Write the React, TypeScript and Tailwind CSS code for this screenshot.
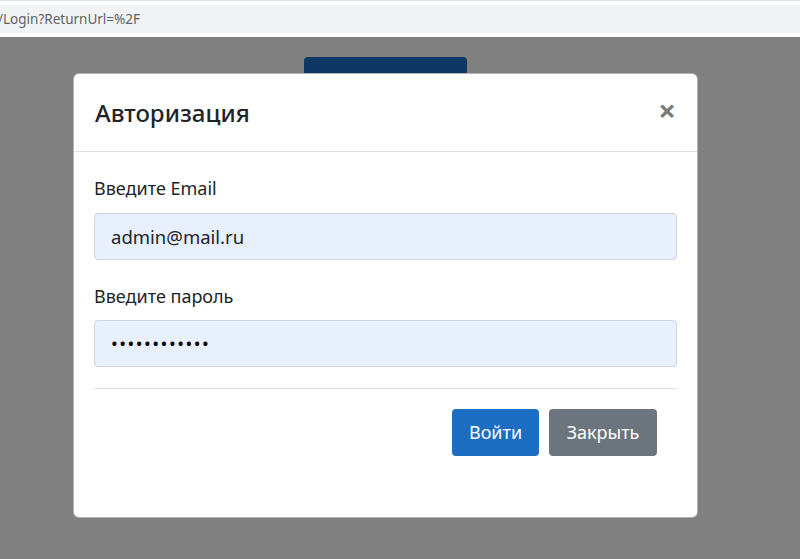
export default function App() {
  return (
    <div className="w-[800px] h-[559px] flex flex-col bg-white overflow-hidden font-['Noto_Sans',sans-serif]">
      {/* browser address bar */}
      <div className="h-px bg-[#dee1e6]" />
      <div className="pt-[4px] pb-[4px] bg-white">
        <div className="h-[28px] bg-[#f1f3f4] flex items-center -ml-[2px] text-[13.5px] text-[#5f6368]">
          /Login?ReturnUrl=%2F
        </div>
      </div>

      {/* page behind the backdrop */}
      <div className="relative flex-1 bg-[#808080]">
        <div className="absolute left-[304px] top-[20px] w-[163px] h-[40px] rounded-[4px] bg-[#0f3763]" />

        {/* modal */}
        <div className="absolute left-[73px] top-[36px] w-[625px] h-[445px] bg-white rounded-[6px] border border-black/30 flex flex-col">
          <div className="h-[78px] flex items-center justify-between pl-[21px] pr-[21px] border-b border-[#dee2e6]">
            <h1 className="text-[24px] font-medium text-[#212529] leading-none">Авторизация</h1>
            <span className="text-[31px] font-bold leading-none text-[#7b7b7b] -mt-[4px]">×</span>
          </div>

          <div className="px-[20px] pt-[23px] flex flex-col">
            <label className="text-[18px] leading-[27px] text-[#212529] mb-[11px]">Введите Email</label>
            <div className="h-[47px] rounded-[4px] border border-[#ced4da] bg-[#e8f0fe] flex items-center px-[16px] text-[18.5px] text-[#212529]">
              admin@mail.ru
            </div>

            <label className="text-[18px] leading-[27px] text-[#212529] mt-[23px] mb-[10px]">Введите пароль</label>
            <div className="h-[47px] rounded-[4px] border border-[#ced4da] bg-[#e8f0fe] flex items-center px-[16px] text-[18px] text-black tracking-[1.5px]">
              ••••••••••••
            </div>

            <div className="h-px bg-[#dee2e6] mt-[21px]" />

            <div className="flex justify-end gap-[10px] mt-[20px] pr-[20px]">
              <button className="h-[47px] w-[87px] rounded-[4px] bg-[#1b6ec2] text-white text-[18px]">Войти</button>
              <button className="h-[47px] w-[108px] rounded-[4px] bg-[#6c757d] text-white text-[18px]">Закрыть</button>
            </div>
          </div>
        </div>
      </div>
    </div>
  )
}
